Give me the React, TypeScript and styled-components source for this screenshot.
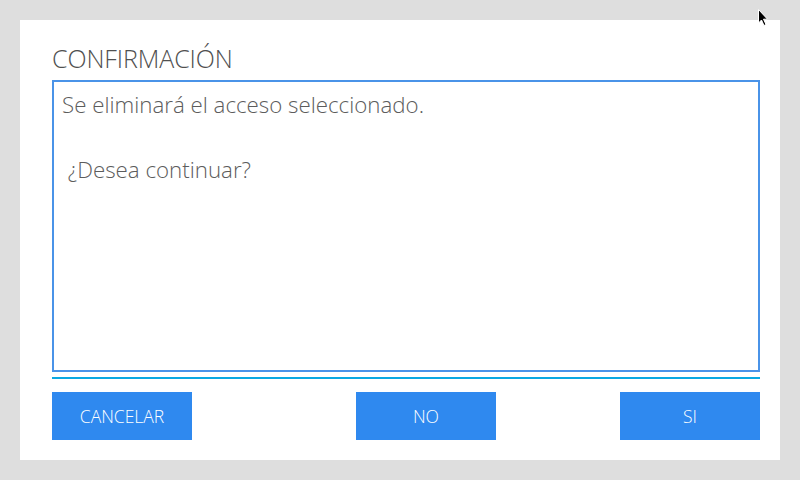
import React from "react";
import styled, { createGlobalStyle } from "styled-components";

const Global = createGlobalStyle`
  html, body { margin: 0; padding: 0; background: #dedede; }
  body { font-family: "Open Sans", "Noto Sans", "Liberation Sans", sans-serif; }
  #root { width: 800px; height: 480px; }
`;

const Page = styled.div`
  position: relative;
  width: 800px;
  height: 480px;
  box-sizing: border-box;
  padding: 20px;
  background: #dedede;
`;

const Dialog = styled.div`
  box-sizing: border-box;
  height: 440px;
  background: #ffffff;
  padding: 0 20px 20px 32px;
  display: flex;
  flex-direction: column;
`;

const Title = styled.h1`
  margin: 0;
  height: 60px;
  box-sizing: border-box;
  padding-top: 23px;
  font-size: 25px;
  line-height: 30px;
  font-weight: 300;
  color: #505050;
  letter-spacing: -0.1px;
`;

const MessageBox = styled.div`
  box-sizing: border-box;
  height: 292px;
  border: 2px solid #4a93e8;
  padding: 7px 8px;
  font-size: 22.3px;
  line-height: 32.5px;
  font-weight: 300;
  color: #5c5c5c;
  white-space: pre-wrap;
`;

const Separator = styled.div`
  margin-top: 5px;
  height: 2px;
  background: #0aa8e2;
`;

const ButtonRow = styled.div`
  margin-top: 13px;
  display: grid;
  grid-template-columns: 304px 264px 140px;
`;

const Button = styled.button`
  width: 140px;
  height: 48px;
  border: none;
  background: #2f89ef;
  color: #ffffff;
  font-family: "Open Sans", "Noto Sans", "Liberation Sans", sans-serif;
  font-size: 17.5px;
  font-weight: 300;
  padding: 0;
  cursor: pointer;
`;

const Cursor = styled.svg`
  position: absolute;
  left: 758px;
  top: 9px;
`;

export default function App() {
  return (
    <>
      <Global />
      <Page>
        <Dialog>
          <Title>CONFIRMACIÓN</Title>
          <MessageBox>{"Se eliminará el acceso seleccionado.\n\n ¿Desea continuar?"}</MessageBox>
          <Separator />
          <ButtonRow>
            <Button>CANCELAR</Button>
            <Button>NO</Button>
            <Button>SI</Button>
          </ButtonRow>
        </Dialog>
        <Cursor width="12" height="18" viewBox="0 0 12 18">
          <path d="M0.5 0.5 L0.5 14 L3.5 11 L6 16.5 L8 15.5 L5.5 10.2 L9.5 10.2 Z" fill="#000" stroke="#fff" strokeWidth="1" />
        </Cursor>
      </Page>
    </>
  );
}
